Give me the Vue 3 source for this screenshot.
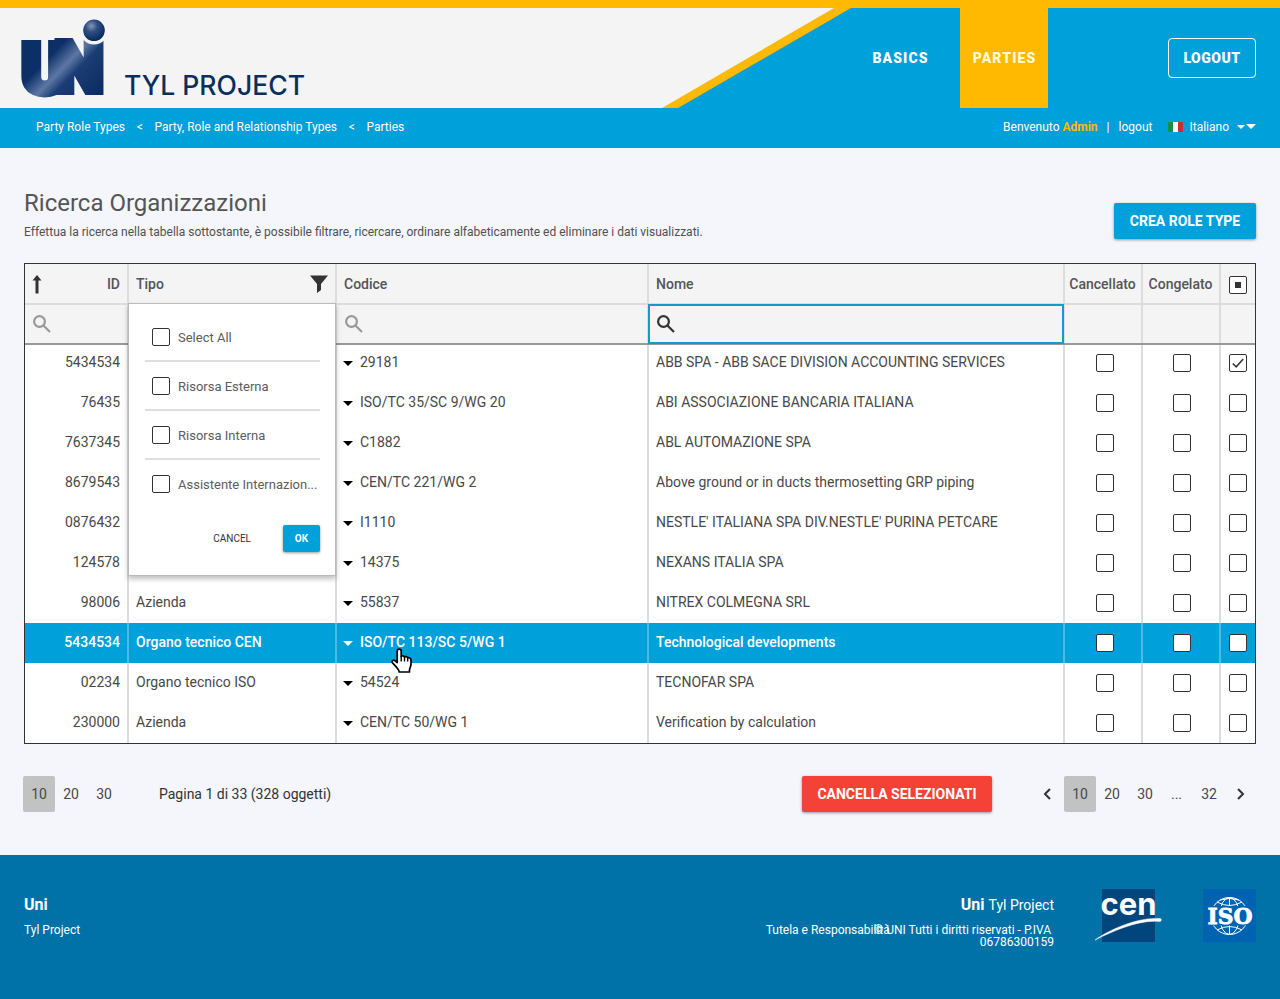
<script setup>
const rows = [
  { id: '5434534', type: '', code: '29181', name: 'ABB SPA - ABB SACE DIVISION ACCOUNTING SERVICES', checked: true },
  { id: '76435', type: '', code: 'ISO/TC 35/SC 9/WG 20', name: 'ABI ASSOCIAZIONE BANCARIA ITALIANA' },
  { id: '7637345', type: '', code: 'C1882', name: 'ABL AUTOMAZIONE SPA' },
  { id: '8679543', type: '', code: 'CEN/TC 221/WG 2', name: 'Above ground or in ducts thermosetting GRP piping' },
  { id: '0876432', type: '', code: 'I1110', name: "NESTLE' ITALIANA SPA DIV.NESTLE' PURINA PETCARE" },
  { id: '124578', type: '', code: '14375', name: 'NEXANS ITALIA SPA' },
  { id: '98006', type: 'Azienda', code: '55837', name: 'NITREX COLMEGNA SRL' },
  { id: '5434534', type: 'Organo tecnico CEN', code: 'ISO/TC 113/SC 5/WG 1', name: 'Technological developments', active: true },
  { id: '02234', type: 'Organo tecnico ISO', code: '54524', name: 'TECNOFAR SPA' },
  { id: '230000', type: 'Azienda', code: 'CEN/TC 50/WG 1', name: 'Verification by calculation' },
]
const options = ['Select All', 'Risorsa Esterna', 'Risorsa Interna', 'Assistente Internazion...']
</script>

<template>
  <div class="page">
    <header class="top">
      <svg class="slant" width="1280" height="100" viewBox="0 0 1280 100">
        <polygon points="0,0 851,0 678,100 0,100" fill="#ffb900" />
        <polygon points="0,0 834,0 662,100 0,100" fill="#f4f4f4" />
      </svg>
      <svg class="brand" width="320" height="100" viewBox="0 8 320 100">
        <defs>
          <linearGradient id="navy" gradientUnits="userSpaceOnUse" x1="20" y1="42" x2="90" y2="110">
            <stop offset="0" stop-color="#0c3166" />
            <stop offset=".32" stop-color="#0b2f66" />
            <stop offset=".5" stop-color="#5d77a4" />
            <stop offset=".62" stop-color="#1b3d74" />
            <stop offset="1" stop-color="#0a2a5e" />
          </linearGradient>
          <radialGradient id="ball" cx=".38" cy=".3" r=".7">
            <stop offset="0" stop-color="#8496b8" />
            <stop offset=".4" stop-color="#2f4f82" />
            <stop offset="1" stop-color="#062a5c" />
          </radialGradient>
        </defs>
        <text class="mark" x="21.800" y="92.500" font-size="69" fill="url(#navy)" stroke="url(#navy)" stroke-width="8">U<tspan dx="-13" dy="-2">N</tspan></text>
        <circle cx="94" cy="30.500" r="14" fill="#f4f4f4" />
        <circle cx="94" cy="30.300" r="10.800" fill="url(#ball)" />
        <text class="project" x="124" y="94.500" textLength="181" lengthAdjust="spacingAndGlyphs">TYL PROJECT</text>
      </svg>
      <nav class="nav">
        <a class="tab">BASICS</a>
        <a class="tab on">PARTIES</a>
        <a class="logout">LOGOUT</a>
      </nav>
    </header>

    <div class="subbar">
      <div class="crumbs">
        <span>Party Role Types</span><i>&lt;</i><span>Party, Role and Relationship Types</span><i>&lt;</i><span>Parties</span>
      </div>
      <div class="user">
        <span>Benvenuto <b>Admin</b></span><span class="bar">|</span><span class="lo">logout</span>
        <svg class="flag" width="15" height="10"><rect width="5" height="10" fill="#119247" /><rect x="5" width="5" height="10" fill="#fff" /><rect x="10" width="5" height="10" fill="#ce2b37" /></svg>
        <span>Italiano</span>
        <svg class="carets" width="20" height="6"><path d="M1 1h8l-4 4zM10 0h10l-5 5z" fill="#fff" /></svg>
      </div>
    </div>

    <main>
      <div class="heading">
        <div>
          <h1>Ricerca Organizzazioni</h1>
          <p>Effettua la ricerca nella tabella sottostante, è possibile filtrare, ricercare, ordinare alfabeticamente ed eliminare i dati visualizzati.</p>
        </div>
        <button class="btn create">CREA ROLE TYPE</button>
      </div>

      <section class="table">
        <div class="row head">
          <div class="cell id">
            <svg class="sort" width="10" height="19"><path d="M5 0L9.500 5.500H6.500V18.500H3.500V5.500H.5z" fill="#333" /></svg>
            <span>ID</span>
          </div>
          <div class="cell type">
            <span>Tipo</span>
            <svg width="18" height="18"><path d="M0 .5h18L11 9v6l-4 3V9z" fill="#333" /></svg>
          </div>
          <div class="cell">Codice</div>
          <div class="cell">Nome</div>
          <div class="cell mid">Cancellato</div>
          <div class="cell mid">Congelato</div>
          <div class="cell mid"><span class="box"><u></u></span></div>
        </div>
        <div class="row filter">
          <div v-for="n in 7" :key="n" class="cell">
            <svg v-if="n === 1 || n === 3 || n === 4" class="lens" :class="{ dark: n === 4 }" width="18" height="18" viewBox="0 0 18 18">
              <circle cx="6.500" cy="6.500" r="5.400" /><path d="M10.500 10.500L17 17" />
            </svg>
            <span v-if="n === 4" class="focus"></span>
          </div>
        </div>
        <div v-for="(r, i) in rows" :key="i" class="row body" :class="{ active: r.active, first: i === 0 }">
          <div class="cell id"><span></span><span>{{ r.id }}</span></div>
          <div class="cell">{{ r.type }}</div>
          <div class="cell code"><svg width="10" height="5"><path d="M0 0h10L5 5z" fill="currentColor" /></svg>{{ r.code }}</div>
          <div class="cell">{{ r.name }}</div>
          <div class="cell mid"><span class="box"></span></div>
          <div class="cell mid"><span class="box"></span></div>
          <div class="cell mid">
            <span class="box"><svg v-if="r.checked" width="12" height="10"><path d="M.8 5.500L4.200 8.800L11.200 1" fill="none" stroke="#333" stroke-width="1.500" /></svg></span>
          </div>
        </div>

        <div class="popup">
          <div v-for="o in options" :key="o" class="opt"><span class="box"></span><span class="label">{{ o }}</span></div>
          <div class="actions"><span>CANCEL</span><button class="btn ok">OK</button></div>
        </div>

        <svg class="hand" width="22" height="26" viewBox="0 0 22 26">
          <path d="M6.200 14.500V3.200c0-2.800 4-2.800 4 0v5.300c.3-1 3-1 3.300.6.700-.9 3-.7 3.200 1 1-.8 3.300-.3 3.300 1.900v4.500c0 2-1.500 3.500-1.500 5.500v2H8.200c0-2-1.800-3.300-2.700-4.800L1.300 14.700c-1-2 1.400-3.300 2.900-1.800z" fill="#fff" stroke="#000" stroke-width="1.700" stroke-linejoin="round" />
          <path d="M10.200 8v5.500M13.500 9v4.500M16.700 10.500v3" stroke="#000" stroke-width="1.400" />
        </svg>
      </section>

      <div class="pager">
        <span class="num cur">10</span><span class="num">20</span><span class="num third">30</span>
        <span class="info">Pagina 1 di 33 (328 oggetti)</span>
        <button class="btn del">CANCELLA SELEZIONATI</button>
        <svg class="chev" width="8" height="12"><path d="M7 1L2 6l5 5" /></svg>
        <span class="num cur">10</span><span class="num">20</span><span class="num third">30</span><span class="num dots">...</span><span class="num last">32</span>
        <svg class="chev" width="8" height="12"><path d="M1 1l5 5-5 5" /></svg>
      </div>
    </main>

    <footer>
      <div class="left">
        <strong>Uni</strong>
        <small>Tyl Project</small>
      </div>
      <div class="right">
        <div class="title"><strong>Uni</strong> Tyl Project</div>
        <div class="legal">
          <span class="tutela">Tutela e Responsabilità</span>
          <span class="copy">© UNI Tutti i diritti riservati - P.IVA&nbsp;<br />06786300159</span>
        </div>
      </div>
      <svg class="cen" width="68" height="54" viewBox="0 0 68 54">
        <rect x="7" width="53" height="53" fill="#00467c" />
        <text x="5.500" y="25.500" textLength="56" lengthAdjust="spacingAndGlyphs">cen</text>
        <path d="M0 51C14 41 42 28 65 29.500c2 .3 1.500 3-.5 3C45 30.500 20 41 0 51z" fill="#fff" stroke="#fff" stroke-width=".5" />
      </svg>
      <svg class="iso" width="53" height="53" viewBox="0 0 53 53">
        <rect width="53" height="53" fill="#0063b1" />
        <g fill="none" stroke="#fff" stroke-width="1">
          <circle cx="26.500" cy="27" r="18.500" /><ellipse cx="26.500" cy="27" rx="10" ry="18.500" /><path d="M26.500 8.500v37M14 13q12.500 7 25 0M14 41q12.500-7 25 0M17 11q9.500-3 19 0" />
        </g>
        <rect x="4" y="17" width="46" height="19.500" fill="#0063b1" />
        <text x="4.500" y="35" textLength="45" lengthAdjust="spacingAndGlyphs">ISO</text>
      </svg>
    </footer>
  </div>
</template>

<style>
body { background: #f4f6fb; }
</style>

<style scoped>
.page { width: 1280px; height: 999px; overflow: hidden; font-family: Roboto, sans-serif; color: #484848; font-size: 14px; display: flex; flex-direction: column; background: #f4f6fb; }
.page * { box-sizing: border-box; }
svg { display: block; flex: none; overflow: visible; }
.top { position: relative; height: 108px; border-top: 8px solid #ffb900; background: #00a0da; display: flex; justify-content: space-between; flex: none; }
.slant { position: absolute; left: 0; top: 0; }
.brand { position: relative; }
.mark { font-family: Roboto, sans-serif; font-weight: 900; stroke-linejoin: miter; }
.project { font-family: Inter, sans-serif; font-size: 27px; font-weight: 500; fill: #0b2f5c; }
.nav { position: relative; display: flex; color: #fff; font-weight: 900; letter-spacing: 1.1px; padding-right: 24px; }
.tab { width: 88px; text-align: center; line-height: 100px; padding-left: 1px; }
.tab:first-child { width: 120px; }
.on { background: #ffb900; color: #fff9dc; }
.logout { width: 88px; height: 40px; margin: 30px 0 0 120px; border: 1px solid #fff; border-radius: 4px; text-align: center; line-height: 38px; letter-spacing: .5px; }
.subbar { height: 40px; flex: none; background: #00a0da; color: #fff; font-size: 12px; display: flex; justify-content: space-between; align-items: center; padding: 0 24px 2px 36px; }
.crumbs i { font-style: normal; margin: 0 11.7px; }
.user { display: flex; align-items: center; }
.user b { color: #ffb900; font-weight: 700; }
.bar { margin: 0 9px; }
.flag { margin: 0 6px 0 16px; }
.carets { margin-left: 7px; }
main { height: 707px; flex: none; padding: 40px 24px 0; }
.heading { display: flex; justify-content: space-between; height: 75px; }
h1 { margin: 0; font-weight: 400; font-size: 24px; line-height: 30px; color: #555; }
p { margin: 6px 0 0; font-size: 12px; line-height: 16px; color: #505050; }
.btn { font-family: Roboto, sans-serif; border: 0; color: #fff; background: #00a0da; font-weight: 700; font-size: 14px; border-radius: 2px; box-shadow: 0 1px 3px rgba(0,0,0,.4); padding: 0; height: 36px; }
.create { width: 142px; margin-top: 15px; }
.table { position: relative; width: 1232px; height: 481px; border: 1px solid #333; background: #fff; }
.row { display: grid; grid-template-columns: 104px 208px 312px 416px 78px 78px 34px; }
.cell { position: relative; display: flex; align-items: center; border-right: 2px solid #dcdcdc; padding: 0 7px; white-space: nowrap; }
.cell:last-child { border-right: 0; }
.mid { justify-content: center; padding: 0 0 0 4px; }
.cell:last-child.mid { padding-left: 0; }
.cell:nth-child(6).mid { padding-left: 2px; }
.head .cell.mid:nth-child(5), .head .cell.mid:nth-child(6) { padding: 1px 1px 0 0; }
.id, .type { justify-content: space-between; }
.head { height: 41px; background: #f4f4f4; border-bottom: 2px solid #dcdcdc; font-weight: 500; color: #555; }
.head .cell { padding-top: 1px; }
.head .cell:last-child { padding-top: 3px; }
.sort { margin-top: 1px; }
.filter { height: 38px; background: #f4f4f4; }
.lens { fill: none; stroke: #999; stroke-width: 2.200; margin-left: 1px; }
.dark { stroke: #333; }
.focus { position: absolute; left: -1px; top: -1px; width: 416px; height: 40px; border: 2px solid #1798ca; z-index: 2; }
.body { height: 40px; }
.body .cell { padding-bottom: 2px; }
.body .cell.mid { padding-bottom: 0; }
.first { border-top: 2px solid #999; }
.first .cell { padding-bottom: 4px; }
.first .cell.mid { padding-bottom: 2px; }
.box { width: 18px; height: 18px; border: 1.500px solid #333; border-radius: 2px; background: #fff; display: flex; align-items: center; justify-content: center; flex: none; }
.box u { width: 6px; height: 6px; background: #333; }
.code svg { color: #000; margin: 3px 7px 0 -1px; }
.active { background: #00a0da; color: #fff; font-weight: 500; }
.active .cell { border-color: #4cbbe4; }
.active .code svg { color: #fff; }
.popup { position: absolute; left: 103px; top: 39px; width: 208px; height: 273px; background: #fff; border: 1px solid #bbb; box-shadow: 0 3px 5px rgba(0,0,0,.25); padding: 9px 15px 0 16px; z-index: 3; }
.opt { height: 49px; border-bottom: 2px solid #dedede; display: flex; align-items: center; gap: 8px; padding: 0 0 0 7px; font-size: 13px; color: #5c5c5c; white-space: nowrap; }
.label { padding-top: 2px; }
.opt:nth-child(4) { border-color: transparent; }
.actions { display: flex; justify-content: flex-end; align-items: center; gap: 32px; margin-top: 16px; font-size: 10px; color: #333; }
.ok { width: 37px; height: 27px; font-size: 10px; }
.hand { position: absolute; left: 366px; top: 384px; z-index: 4; }
.pager { display: flex; align-items: center; height: 36px; margin: 32px 0 0 -1px; color: #484848; }
.num { width: 32px; text-align: center; line-height: 36px; }
.third { width: 34px; }
.dots { width: 29px; }
.last { width: 36px; }
.cur { background: #c2c2c2; border-radius: 2px; }
.info { margin-left: 38px; width: 643px; color: #333; }
.del { width: 190px; background: #f44336; margin-right: 51px; }
.chev { fill: none; stroke: #333; stroke-width: 2; margin-right: 13px; }
.chev:last-child { margin: 0 0 0 10px; }
footer { height: 144px; flex: none; background: #0072a8; color: #fff; display: flex; padding: 34px 24px 0; }
.left { width: 400px; display: flex; flex-direction: column; padding-top: 5px; }
strong { font-size: 16px; line-height: 22px; font-weight: 700; }
small { font-size: 12px; line-height: 16px; margin-top: 6px; }
.right { width: 630px; text-align: right; padding-top: 5px; font-size: 14px; }
.title { line-height: 22px; }
.title strong { margin-right: .8px; }
.legal { display: flex; justify-content: flex-end; font-size: 12px; line-height: 12px; margin-top: 8px; white-space: nowrap; }
.tutela { margin-right: -16px; }
.cen { margin-left: 41px; }
.cen text { font: 700 31px Inter, sans-serif; fill: #fff; }
.iso { margin-left: 40px; }
.iso text { font: 700 23px "DejaVu Serif", serif; fill: #fff; stroke: #fff; stroke-width: .8px; }
</style>
